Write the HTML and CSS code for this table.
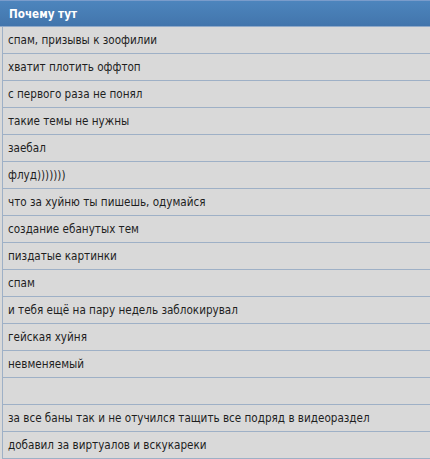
FILE: index.html
```html
<!DOCTYPE html>
<html lang="ru">
<head>
<meta charset="utf-8">
<link rel="stylesheet" href="styles.css">
</head>
<body>
<div class="table">
  <div class="head"><span class="cell">Почему тут</span></div>
  <div class="row"><span class="cell">спам, призывы к зоофилии</span></div>
  <div class="row"><span class="cell">хватит плотить оффтоп</span></div>
  <div class="row"><span class="cell">с первого раза не понял</span></div>
  <div class="row"><span class="cell">такие темы не нужны</span></div>
  <div class="row"><span class="cell">заебал</span></div>
  <div class="row"><span class="cell">флуд)))))))</span></div>
  <div class="row"><span class="cell">что за хуйню ты пишешь, одумайся</span></div>
  <div class="row"><span class="cell">создание ебанутых тем</span></div>
  <div class="row"><span class="cell">пиздатые картинки</span></div>
  <div class="row"><span class="cell">спам</span></div>
  <div class="row"><span class="cell">и тебя ещё на пару недель заблокирувал</span></div>
  <div class="row"><span class="cell">гейская хуйня</span></div>
  <div class="row"><span class="cell">невменяемый</span></div>
  <div class="row"><span class="cell"></span></div>
  <div class="row"><span class="cell">за все баны так и не отучился тащить все подряд в видеораздел</span></div>
  <div class="row"><span class="cell">добавил за виртуалов и вскукареки</span></div>
</div>
</body>
</html>
```
FILE: styles.css
```css
html, body {
  margin: 0;
  padding: 0;
  background: #d9d9d9;
}
.table {
  width: 430px;
  font-family: "DejaVu Sans Condensed", "DejaVu Sans", sans-serif;
  font-size: 11.6px;
  color: #1e1e1e;
}
.head {
  box-sizing: border-box;
  height: 27px;
  border-top: 1px solid #7a9ccb;
  background: linear-gradient(#4d85bd, #4275ac);
  border-bottom: 1px solid #8fa9c9;
  display: flex;
  align-items: center;
}
.head .cell {
  color: #fff;
  font-weight: bold;
  padding-left: 9px;
}
.row {
  box-sizing: border-box;
  height: 27px;
  border-bottom: 1px solid #9eb0c6;
  margin-left: 2px;
  border-left: 1px solid #9eb0c6;
  display: flex;
  align-items: center;
}
.row .cell {
  padding-left: 5px;
}
```
